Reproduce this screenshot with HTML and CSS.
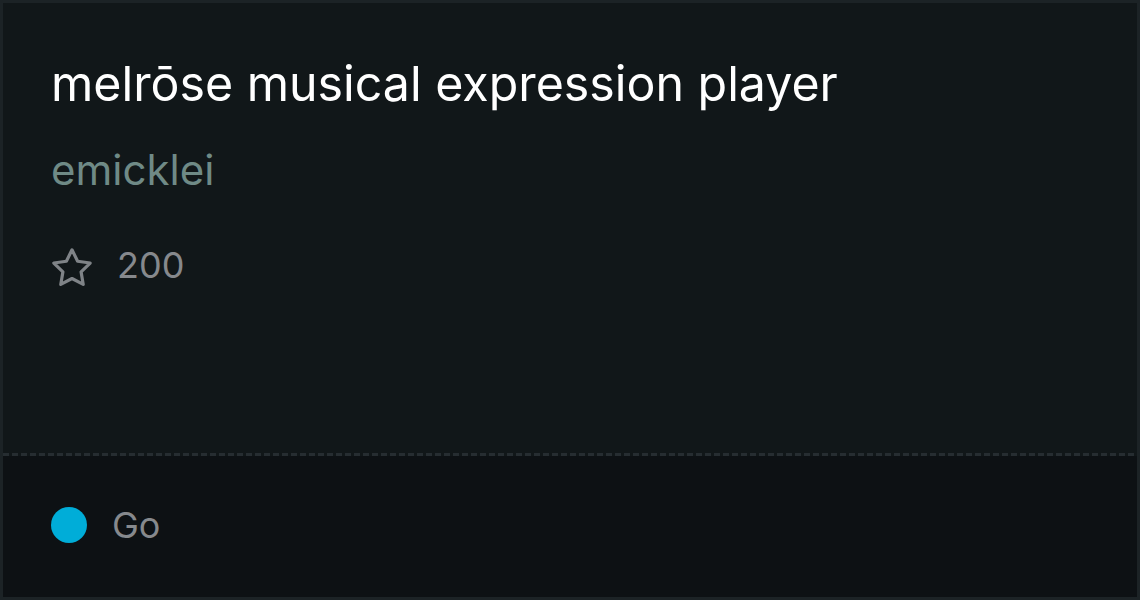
FILE: index.html
```html
<!DOCTYPE html>
<html>
<head>
<meta charset="utf-8">
<link rel="stylesheet" href="styles.css">
</head>
<body>
<div class="card">
  <div class="main">
    <div class="title">melrōse musical expression player</div>
    <div class="owner">emicklei</div>
    <div class="stars">
      <svg class="star" viewBox="1 1 22 22" width="40" height="40" fill="none" stroke="currentColor" stroke-width="1.75" stroke-linejoin="round" stroke-linecap="round"><polygon points="12 2 15.09 8.26 22 9.27 17 14.14 18.18 21.02 12 17.77 5.82 21.02 7 14.14 2 9.27 8.91 8.26 12 2"/></svg>
      <span class="count">200</span>
    </div>
  </div>
  <div class="divider"></div>
  <div class="footer">
    <span class="dot"></span>
    <span class="lang">Go</span>
  </div>
</div>
</body>
</html>
```
FILE: styles.css
```css
html, body { margin: 0; padding: 0; }
body { background: #1c2326; font-family: Inter, "Noto Sans", sans-serif; }
.card {
  width: 1140px; height: 600px; box-sizing: border-box;
  border: 3px solid #1c2326;
  display: flex; flex-direction: column;
}
.main {
  background: #111719;
  height: 450px; box-sizing: border-box;
  padding: 52px 48px 0 48px;
}
.title { color: #ffffff; font-size: 48.3px; line-height: 58px; }
.owner { color: #6f8a86; font-size: 42px; line-height: 50px; margin-top: 32px; }
.stars {
  display: flex; align-items: flex-start; gap: 25px; margin-top: 48px;
  color: #86898d; font-size: 36px; line-height: 44px;
}
.star { display: block; margin-top: 5px; margin-left: 1px; color: #7f8387; }
.divider {
  height: 3px; flex: none;
  background: repeating-linear-gradient(90deg, #262d31 0 6px, #111719 6px 9px);
}
.footer {
  flex: 1; background: #0d1114;
  display: flex; align-items: center; padding: 0 48px 3px 48px;
  color: #86898d; font-size: 36px; line-height: 44px; gap: 25px;
}
.dot { width: 36px; height: 36px; border-radius: 50%; background: #00add8; flex: none; }
```
